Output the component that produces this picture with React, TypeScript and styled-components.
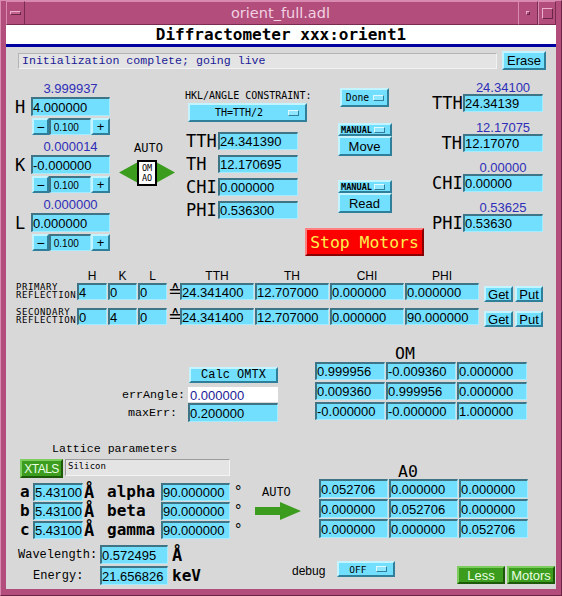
import React from "react";
import styled, { createGlobalStyle } from "styled-components";

const MONO = `"DejaVu Sans Mono", "Liberation Mono", monospace`;
const LMONO = `"Liberation Mono", "DejaVu Sans Mono", monospace`;
const SANS = `"Liberation Sans", Arial, sans-serif`;

const LB = "#73dfff";
const RB = "#2e2eb8";
const BG = "#d8d8d8";
const GREEN = "#3c9c1e";
const FRAME = "#b34e7c";

const GlobalStyle = createGlobalStyle`
  html, body { margin: 0; padding: 0; }
  body { width: 562px; height: 596px; overflow: hidden; background: ${FRAME}; }
  * { box-sizing: border-box; }
`;

/* ---------- window frame ---------- */
const Window = styled.div`
  width: 562px;
  height: 596px;
  background: ${FRAME};
  border: 1px solid;
  border-color: #d88ab0 #6a2444 #6a2444 #d88ab0;
  padding: 0 5px 6px 5px;
  display: flex;
  flex-direction: column;
`;
const TitleBar = styled.div`
  height: 24px;
  display: flex;
  align-items: stretch;
`;
const TitleButton = styled.div<{ $w: number }>`
  width: ${(p) => p.$w}px;
  border: 1px solid;
  border-color: #d88ab0 #7a2c50 #7a2c50 #d88ab0;
  display: flex;
  align-items: center;
  justify-content: center;
`;
const TitleText = styled.div`
  flex: 1;
  text-align: center;
  line-height: 22px;
  padding-left: 18px;
  font-family: "DejaVu Sans", sans-serif;
  font-size: 14.5px;
  color: #f2d2e2;
  border-top: 1px solid #d88ab0;
  border-bottom: 1px solid #7a2c50;
`;
const MinBar = styled.div`
  width: 11px;
  height: 4px;
  background: #c4648f;
  border: 1px solid;
  border-color: #eab0cc #6a2444 #6a2444 #eab0cc;
`;
const SquareMark = styled.div<{ $s: number }>`
  width: ${(p) => p.$s}px;
  height: ${(p) => p.$s}px;
  border: 1px solid;
  border-color: #eab0cc #6a2444 #6a2444 #eab0cc;
`;

/* ---------- content ---------- */
const Content = styled.div`
  flex: 1;
  background: ${BG};
  display: flex;
  flex-direction: column;
  overflow: hidden;
`;
const Header = styled.div`
  height: 22px;
  background: #fff;
  border-bottom: 3px solid #0000a0;
  text-align: center;
  font: bold 16px ${MONO};
  line-height: 19px;
  color: #000;
`;
const MessageRow = styled.div`
  margin-top: 4px;
  height: 19px;
  display: flex;
  align-items: center;
  padding-left: 12px;
`;
const MessageBar = styled.div`
  width: 479px;
  height: 16px;
  background: #e4e4e4;
  border: 1px solid;
  border-color: #b4b4b4 #f2f2f2 #f2f2f2 #b4b4b4;
  font: 11.6px ${LMONO};
  line-height: 14px;
  color: #1a1a96;
  padding-left: 3px;
  white-space: nowrap;
`;

/* ---------- generic widgets ---------- */
const Field = styled.div<{ $w: number; $h: number; $bg?: string; $fs?: number }>`
  width: ${(p) => p.$w}px;
  height: ${(p) => p.$h}px;
  flex: none;
  background: ${(p) => p.$bg ?? LB};
  border-style: solid;
  border-width: 2px 1px 1px 2px;
  border-color: #3f7486 #a6ebff #a6ebff #3f7486;
  font-family: ${SANS};
  font-size: ${(p) => p.$fs ?? 13}px;
  color: #000;
  white-space: nowrap;
  overflow: hidden;
  display: flex;
  align-items: center;
`;
const Btn = styled.div<{ $w: number; $h: number; $fs?: number; $mono?: boolean }>`
  width: ${(p) => p.$w}px;
  height: ${(p) => p.$h}px;
  flex: none;
  background: ${LB};
  border: 2px solid;
  border-color: #c4f4ff #2f7f9a #2f7f9a #c4f4ff;
  display: flex;
  align-items: center;
  justify-content: center;
  font-family: ${(p) => (p.$mono ? LMONO : SANS)};
  font-size: ${(p) => p.$fs ?? 13}px;
  color: #000;
  white-space: nowrap;
`;
const MenuBox = styled(Btn)<{ $pr: number }>`
  justify-content: space-between;
  padding-right: ${(p) => p.$pr}px;
`;
const MenuLabel = styled.span<{ $fs: number; $bold?: boolean }>`
  flex: 1;
  text-align: center;
  font-family: ${MONO};
  font-size: ${(p) => p.$fs}px;
  font-weight: ${(p) => (p.$bold ? "bold" : "normal")};
`;
const Indicator = styled.span`
  width: 11px;
  height: 6px;
  background: #8fe6ff;
  border: 1px solid;
  border-color: #e0faff #2f7f9a #2f7f9a #e0faff;
`;
const GreenBtn = styled.div<{ $w: number; $h: number; $fs?: number; $ls?: number }>`
  width: ${(p) => p.$w}px;
  height: ${(p) => p.$h}px;
  flex: none;
  background: ${GREEN};
  border: 2px solid;
  border-color: #7dcc5e #1c5a0a #1c5a0a #7dcc5e;
  display: flex;
  align-items: center;
  justify-content: center;
  font-family: ${SANS};
  font-size: ${(p) => p.$fs ?? 13}px;
  letter-spacing: ${(p) => p.$ls ?? 0}px;
  color: #e8ffe2;
`;

function Menu(props: { w: number; h: number; pr: number; fs: number; bold?: boolean; label: string }) {
  return (
    <MenuBox $w={props.w} $h={props.h} $pr={props.pr}>
      <MenuLabel $fs={props.fs} $bold={props.bold}>
        {props.label}
      </MenuLabel>
      <Indicator />
    </MenuBox>
  );
}

/* ---------- top section ---------- */
const TopSection = styled.div`
  margin-top: 12px;
  height: 176px;
  padding-left: 8px;
  display: grid;
  grid-template-columns: 102px 69px 120px 127px 111px;
  align-items: start;
`;
const HklColumn = styled.div`
  display: flex;
  flex-direction: column;
  gap: 5px;
`;
const HklBlock = styled.div`
  width: 96px;
  display: flex;
  flex-direction: column;
`;
const Readback = styled.div<{ $pl: number; $h: number }>`
  height: ${(p) => p.$h}px;
  padding-left: ${(p) => p.$pl}px;
  text-align: center;
  font: 13px ${SANS};
  line-height: ${(p) => p.$h}px;
  color: ${RB};
  white-space: nowrap;
`;
const LabelRow = styled.div<{ $mt?: number }>`
  display: flex;
  align-items: center;
  margin-top: ${(p) => p.$mt ?? 0}px;
`;
const BigLabel = styled.div<{ $w: number; $align?: string }>`
  width: ${(p) => p.$w}px;
  flex: none;
  font: 17px ${MONO};
  text-align: ${(p) => p.$align ?? "left"};
  padding-left: ${(p) => (p.$align === "right" ? 0 : 1)}px;
  padding-right: ${(p) => (p.$align === "right" ? 1 : 0)}px;
  color: #000;
  line-height: 18px;
`;
const TweakRow = styled.div`
  margin-top: 2px;
  margin-left: 18px;
  display: flex;
`;
const AutoColumn = styled.div`
  width: 62px;
  padding-top: 61px;
  display: flex;
  flex-direction: column;
  align-items: center;
`;
const AutoText = styled.div<{ $pl?: number }>`
  font: 12px ${LMONO};
  line-height: 12px;
  color: #000;
  padding-left: ${(p) => p.$pl ?? 0}px;
`;
const DiamondSvg = styled.svg`
  margin-top: 5px;
  display: block;
`;
const ConstraintColumn = styled.div`
  padding-top: 8px;
  display: flex;
  flex-direction: column;
`;
const SmallCaption = styled.div`
  font: 10px ${MONO};
  line-height: 12px;
  white-space: nowrap;
  color: #000;
`;
const MenuSlot = styled.div`
  margin-top: 1px;
  margin-left: 3px;
`;
const AngleList = styled.div`
  margin-top: 10px;
  display: flex;
  flex-direction: column;
  gap: 5px;
`;
const ControlColumn = styled.div`
  width: 119px;
  padding-top: 6px;
  display: flex;
  flex-direction: column;
  align-items: center;
`;
const Spacer = styled.div<{ $h: number }>`
  height: ${(p) => p.$h}px;
  flex: none;
`;
const StopBtn = styled.div`
  width: 119px;
  height: 28px;
  background: #fc0000;
  border: 2px solid;
  border-color: #ff8080 #8a0000 #8a0000 #ff8080;
  display: flex;
  align-items: center;
  justify-content: center;
  font: 16.4px ${MONO};
  color: #fdf04e;
`;
const MotorColumn = styled.div`
  width: 111px;
  display: flex;
  flex-direction: column;
  gap: 10px;
`;
const MotorBlock = styled.div`
  display: flex;
  flex-direction: column;
`;

/* ---------- reflections ---------- */
const ReflGrid = styled.div`
  margin-top: 12px;
  padding-left: 10px;
  display: grid;
  grid-template-columns: 60px 30px 29px 29px 11px 74px 74px 74px 74px 33px 29px;
  grid-template-rows: 13px 25px 19px;
  column-gap: 1px;
  align-items: start;
`;
const ColHead = styled.div`
  font: 12px ${SANS};
  line-height: 12px;
  text-align: center;
  color: #000;
`;
const ReflName = styled.div`
  font: 9px ${MONO};
  letter-spacing: 0.6px;
  line-height: 8px;
  white-space: nowrap;
  color: #000;
`;
const EqSym = styled.div`
  font: 17px "DejaVu Sans", sans-serif;
  line-height: 17px;
  text-align: right;
  color: #000;
`;
const GetPutSlot = styled.div`
  margin-top: 3px;
  display: flex;
  justify-content: flex-end;
`;

/* ---------- middle (OM) ---------- */
const MiddleSection = styled.div`
  margin-top: 18px;
  padding-left: 82px;
  display: flex;
  align-items: flex-start;
`;
const CalcBlock = styled.div`
  width: 190px;
  padding-top: 22px;
  display: flex;
  flex-direction: column;
  align-items: flex-end;
`;
const SmallLabel = styled.div<{ $mr: number }>`
  font: 11.7px ${LMONO};
  margin-right: ${(p) => p.$mr}px;
  color: #000;
  white-space: nowrap;
`;
const MatrixBlock = styled.div<{ $ml: number }>`
  margin-left: ${(p) => p.$ml}px;
  display: flex;
  flex-direction: column;
`;
const MatrixTitle = styled.div<{ $pl: number; $h: number }>`
  height: ${(p) => p.$h}px;
  padding-left: ${(p) => p.$pl}px;
  font: 16.5px ${MONO};
  line-height: ${(p) => p.$h}px;
  color: #000;
`;
const Matrix = styled.div<{ $cw: number; $rh: number; $rg: number; $mt: number }>`
  margin-top: ${(p) => p.$mt}px;
  display: grid;
  grid-template-columns: repeat(3, ${(p) => p.$cw}px);
  grid-auto-rows: ${(p) => p.$rh}px;
  column-gap: 1px;
  row-gap: ${(p) => p.$rg}px;
`;

/* ---------- lattice ---------- */
const LatticeSection = styled.div`
  margin-top: 21px;
  padding-left: 12px;
  display: flex;
  align-items: flex-start;
`;
const LatticeLeft = styled.div`
  width: 237px;
  flex: none;
  display: flex;
  flex-direction: column;
`;
const LatticeTitle = styled.div`
  padding-left: 34px;
  font: 11.6px ${LMONO};
  line-height: 12px;
  color: #000;
`;
const XtalRow = styled.div`
  margin-top: 4px;
  padding-left: 2px;
  display: flex;
  align-items: flex-start;
  gap: 2px;
`;
const NameField = styled.div`
  width: 165px;
  height: 17px;
  background: #e4e4e4;
  border: 1px solid;
  border-color: #9c9c9c #f4f4f4 #f4f4f4 #9c9c9c;
  font: 9px ${MONO};
  padding: 1px 0 0 2px;
  color: #000;
`;
const ParamGrid = styled.div`
  margin-top: 5px;
  display: grid;
  grid-template-columns: 15px 50px 24px 54px 69px 15px;
  grid-auto-rows: 18px;
  row-gap: 1px;
  align-items: center;
`;
const BoldText = styled.div<{ $fs: number; $pl?: number }>`
  font: bold ${(p) => p.$fs}px ${MONO};
  line-height: 18px;
  padding-left: ${(p) => p.$pl ?? 0}px;
  color: #000;
  white-space: nowrap;
`;
const Degree = styled.div`
  align-self: stretch;
  font: 16px ${SANS};
  line-height: 18px;
  padding-left: 5px;
  color: #000;
`;
const UnitRow = styled.div<{ $mt: number }>`
  margin-top: ${(p) => p.$mt}px;
  height: 19px;
  display: flex;
  align-items: center;
`;
const UnitLabel = styled.div<{ $pl: number }>`
  width: 82px;
  flex: none;
  padding-left: ${(p) => p.$pl}px;
  font: 12px ${LMONO};
  color: #000;
`;
const UnitSlot = styled.div`
  margin-left: 4px;
`;
const LatticeRight = styled.div`
  flex: 1;
  display: flex;
  flex-direction: column;
`;
const A0Row = styled.div`
  padding-top: 22px;
  display: flex;
  align-items: flex-start;
`;
const ArrowColumn = styled.div`
  width: 64px;
  flex: none;
  padding-top: 22px;
  display: flex;
  flex-direction: column;
`;
const ArrowSvg = styled.svg`
  margin-top: 3px;
  display: block;
`;
const BottomRow = styled.div`
  margin-top: 23px;
  display: flex;
  align-items: flex-start;
`;
const DebugLabel = styled.div`
  margin-left: 37px;
  margin-top: 3px;
  font: 12px ${SANS};
  line-height: 14px;
  color: #000;
`;
const DebugSlot = styled.div`
  margin-left: 12px;
`;
const NavGroup = styled.div`
  margin-left: auto;
  margin-right: 1px;
  margin-top: 5px;
  display: flex;
  gap: 2px;
`;

/* ---------- data ---------- */
const hkl = [
  { l: "H", rb: "3.999937", v: "4.000000" },
  { l: "K", rb: "0.000014", v: "-0.000000" },
  { l: "L", rb: "0.000000", v: "0.000000" },
];
const angles = [
  ["TTH", "24.341390"],
  ["TH", "12.170695"],
  ["CHI", "0.000000"],
  ["PHI", "0.536300"],
];
const motors = [
  ["TTH", "24.34100", "24.34139"],
  ["TH", "12.17075", "12.17070"],
  ["CHI", "0.00000", "0.00000"],
  ["PHI", "0.53625", "0.53630"],
];
const refl = [
  { n: ["PRIMARY", "REFLECTION"], hkl: ["4", "0", "0"], ang: ["24.341400", "12.707000", "0.000000", "0.000000"] },
  { n: ["SECONDARY", "REFLECTION"], hkl: ["0", "4", "0"], ang: ["24.341400", "12.707000", "0.000000", "90.000000"] },
];
const OM = [
  ["0.999956", "-0.009360", "0.000000"],
  ["0.009360", "0.999956", "0.000000"],
  ["-0.000000", "-0.000000", "1.000000"],
];
const A0 = [
  ["0.052706", "0.000000", "0.000000"],
  ["0.000000", "0.052706", "0.000000"],
  ["0.000000", "0.000000", "0.052706"],
];
const lattice = [
  ["a", "5.431000", "alpha", "90.000000"],
  ["b", "5.431000", "beta", "90.000000"],
  ["c", "5.431000", "gamma", "90.000000"],
];

export default function App() {
  return (
    <>
      <GlobalStyle />
      <Window>
        <TitleBar>
          <TitleButton $w={19}>
            <MinBar />
          </TitleButton>
          <TitleText>orient_full.adl</TitleText>
          <TitleButton $w={20}>
            <SquareMark $s={4} />
          </TitleButton>
          <TitleButton $w={18}>
            <SquareMark $s={11} />
          </TitleButton>
        </TitleBar>
        <Content>
          <Header>Diffractometer xxx:orient1</Header>
          <MessageRow>
            <MessageBar>Initialization complete; going live</MessageBar>
            <Btn $w={44} $h={19} style={{ marginLeft: 5 }}>
              Erase
            </Btn>
          </MessageRow>

          <TopSection>
            <HklColumn>
              {hkl.map((r) => (
                <HklBlock key={r.l}>
                  <Readback $pl={17} $h={14}>
                    {r.rb}
                  </Readback>
                  <LabelRow $mt={1}>
                    <BigLabel $w={17}>{r.l}</BigLabel>
                    <Field $w={79} $h={19}>
                      {r.v}
                    </Field>
                  </LabelRow>
                  <TweakRow>
                    <Btn $w={17} $h={17} $fs={14}>
                      −
                    </Btn>
                    <Field $w={42} $h={17} $fs={10}>
                      &nbsp;0.100
                    </Field>
                    <Btn $w={19} $h={17} $fs={13}>
                      +
                    </Btn>
                  </TweakRow>
                </HklBlock>
              ))}
            </HklColumn>

            <AutoColumn>
              <AutoText $pl={3}>AUTO</AutoText>
              <DiamondSvg width="56" height="26" viewBox="0 0 56 26">
                <polygon points="0,12.5 19,2 19,23" fill={GREEN} />
                <polygon points="56,12.5 37,2 37,23" fill={GREEN} />
                <rect x="19" y="1" width="18" height="24" fill="#fff" stroke="#000" strokeWidth="2" />
                <text x="28" y="11" textAnchor="middle" fontSize="8.5" fontFamily="DejaVu Sans Mono, monospace" fill="#000">
                  OM
                </text>
                <text x="28" y="21" textAnchor="middle" fontSize="8.5" fontFamily="DejaVu Sans Mono, monospace" fill="#000">
                  AO
                </text>
              </DiamondSvg>
            </AutoColumn>

            <ConstraintColumn>
              <SmallCaption>HKL/ANGLE CONSTRAINT:</SmallCaption>
              <MenuSlot>
                <Menu w={119} h={19} pr={6} fs={10} label="TH=TTH/2" />
              </MenuSlot>
              <AngleList>
                {angles.map(([l, v]) => (
                  <LabelRow key={l}>
                    <BigLabel $w={33}>{l}</BigLabel>
                    <Field $w={80} $h={18}>
                      {v}
                    </Field>
                  </LabelRow>
                ))}
              </AngleList>
            </ConstraintColumn>

            <ControlColumn>
              <Menu w={49} h={19} pr={3} fs={9.7} label="Done" />
              <Spacer $h={16} />
              <Menu w={54} h={13} pr={5} fs={8.6} bold label="MANUAL" />
              <Btn $w={54} $h={20}>
                Move
              </Btn>
              <Spacer $h={24} />
              <Menu w={54} h={13} pr={5} fs={8.6} bold label="MANUAL" />
              <Btn $w={54} $h={20}>
                Read
              </Btn>
              <Spacer $h={15} />
              <StopBtn>Stop Motors</StopBtn>
            </ControlColumn>

            <MotorColumn>
              {motors.map(([l, rb, v]) => (
                <MotorBlock key={l}>
                  <Readback $pl={31} $h={12}>
                    {rb}
                  </Readback>
                  <LabelRow>
                    <BigLabel $w={31} $align="right">
                      {l}
                    </BigLabel>
                    <Field $w={80} $h={18}>
                      {v}
                    </Field>
                  </LabelRow>
                </MotorBlock>
              ))}
            </MotorColumn>
          </TopSection>

          <ReflGrid>
            <span />
            <ColHead>H</ColHead>
            <ColHead>K</ColHead>
            <ColHead>L</ColHead>
            <span />
            <ColHead>TTH</ColHead>
            <ColHead>TH</ColHead>
            <ColHead>CHI</ColHead>
            <ColHead>PHI</ColHead>
            <span />
            <span />
            {refl.map((r) => (
              <React.Fragment key={r.n[0]}>
                <ReflName>
                  {r.n[0]}
                  <br />
                  {r.n[1]}
                </ReflName>
                {r.hkl.map((v, i) => (
                  <Field key={"h" + i} $w={i === 0 ? 30 : 29} $h={17}>
                    {v}
                  </Field>
                ))}
                <EqSym>≙</EqSym>
                {r.ang.map((v, i) => (
                  <Field key={"a" + i} $w={74} $h={17}>
                    {v}
                  </Field>
                ))}
                <GetPutSlot>
                  <Btn $w={29} $h={16}>
                    Get
                  </Btn>
                </GetPutSlot>
                <GetPutSlot>
                  <Btn $w={28} $h={16}>
                    Put
                  </Btn>
                </GetPutSlot>
              </React.Fragment>
            ))}
          </ReflGrid>

          <MiddleSection>
            <CalcBlock>
              <Btn $w={89} $h={16} $mono $fs={12}>
                Calc OMTX
              </Btn>
              <LabelRow $mt={4}>
                <SmallLabel $mr={3}>errAngle:</SmallLabel>
                <Field $w={90} $h={15} $bg="#ffffff" style={{ borderColor: "#fff" }}>
                  <span style={{ color: "#1a1a96" }}>0.000000</span>
                </Field>
              </LabelRow>
              <LabelRow $mt={1}>
                <SmallLabel $mr={11}>maxErr:</SmallLabel>
                <Field $w={90} $h={19}>
                  0.200000
                </Field>
              </LabelRow>
            </CalcBlock>
            <MatrixBlock $ml={37}>
              <MatrixTitle $pl={80} $h={17}>
                OM
              </MatrixTitle>
              <Matrix $cw={70} $rh={18} $rg={2} $mt={0}>
                {OM.flat().map((v, i) => (
                  <Field key={i} $w={70} $h={18}>
                    {v}
                  </Field>
                ))}
              </Matrix>
            </MatrixBlock>
          </MiddleSection>

          <LatticeSection>
            <LatticeLeft>
              <LatticeTitle>Lattice parameters</LatticeTitle>
              <XtalRow>
                <GreenBtn $w={43} $h={19} $fs={12} $ls={-0.5}>
                  XTALS
                </GreenBtn>
                <NameField>Silicon</NameField>
              </XtalRow>
              <ParamGrid>
                {lattice.map(([l, v, n, a]) => (
                  <React.Fragment key={l}>
                    <BoldText $fs={16} $pl={2}>
                      {l}
                    </BoldText>
                    <Field $w={50} $h={18}>
                      {v}
                    </Field>
                    <BoldText $fs={17} $pl={1}>
                      Å
                    </BoldText>
                    <BoldText $fs={16}>{n}</BoldText>
                    <Field $w={69} $h={18}>
                      {a}
                    </Field>
                    <Degree>°</Degree>
                  </React.Fragment>
                ))}
              </ParamGrid>
              <UnitRow $mt={6}>
                <UnitLabel $pl={0}>Wavelength:</UnitLabel>
                <Field $w={68} $h={19}>
                  0.572495
                </Field>
                <UnitSlot>
                  <BoldText $fs={17}>Å</BoldText>
                </UnitSlot>
              </UnitRow>
              <UnitRow $mt={2}>
                <UnitLabel $pl={15}>Energy:</UnitLabel>
                <Field $w={68} $h={19}>
                  21.656826
                </Field>
                <UnitSlot>
                  <BoldText $fs={16}>keV</BoldText>
                </UnitSlot>
              </UnitRow>
            </LatticeLeft>

            <LatticeRight>
              <A0Row>
                <ArrowColumn>
                  <AutoText $pl={7}>AUTO</AutoText>
                  <ArrowSvg width="46" height="18" viewBox="0 0 46 18">
                    <rect x="0" y="5" width="26" height="8" fill={GREEN} />
                    <polygon points="25,0 46,9 25,18" fill={GREEN} />
                  </ArrowSvg>
                </ArrowColumn>
                <MatrixBlock $ml={0}>
                  <MatrixTitle $pl={79} $h={14}>
                    A0
                  </MatrixTitle>
                  <Matrix $cw={69} $rh={19} $rg={1} $mt={0}>
                    {A0.flat().map((v, i) => (
                      <Field key={i} $w={69} $h={19}>
                        {v}
                      </Field>
                    ))}
                  </Matrix>
                </MatrixBlock>
              </A0Row>
              <BottomRow>
                <DebugLabel>debug</DebugLabel>
                <DebugSlot>
                  <Menu w={58} h={16} pr={6} fs={9.5} label="OFF" />
                </DebugSlot>
                <NavGroup>
                  <GreenBtn $w={48} $h={18}>
                    Less
                  </GreenBtn>
                  <GreenBtn $w={48} $h={18}>
                    Motors
                  </GreenBtn>
                </NavGroup>
              </BottomRow>
            </LatticeRight>
          </LatticeSection>
        </Content>
      </Window>
    </>
  );
}
